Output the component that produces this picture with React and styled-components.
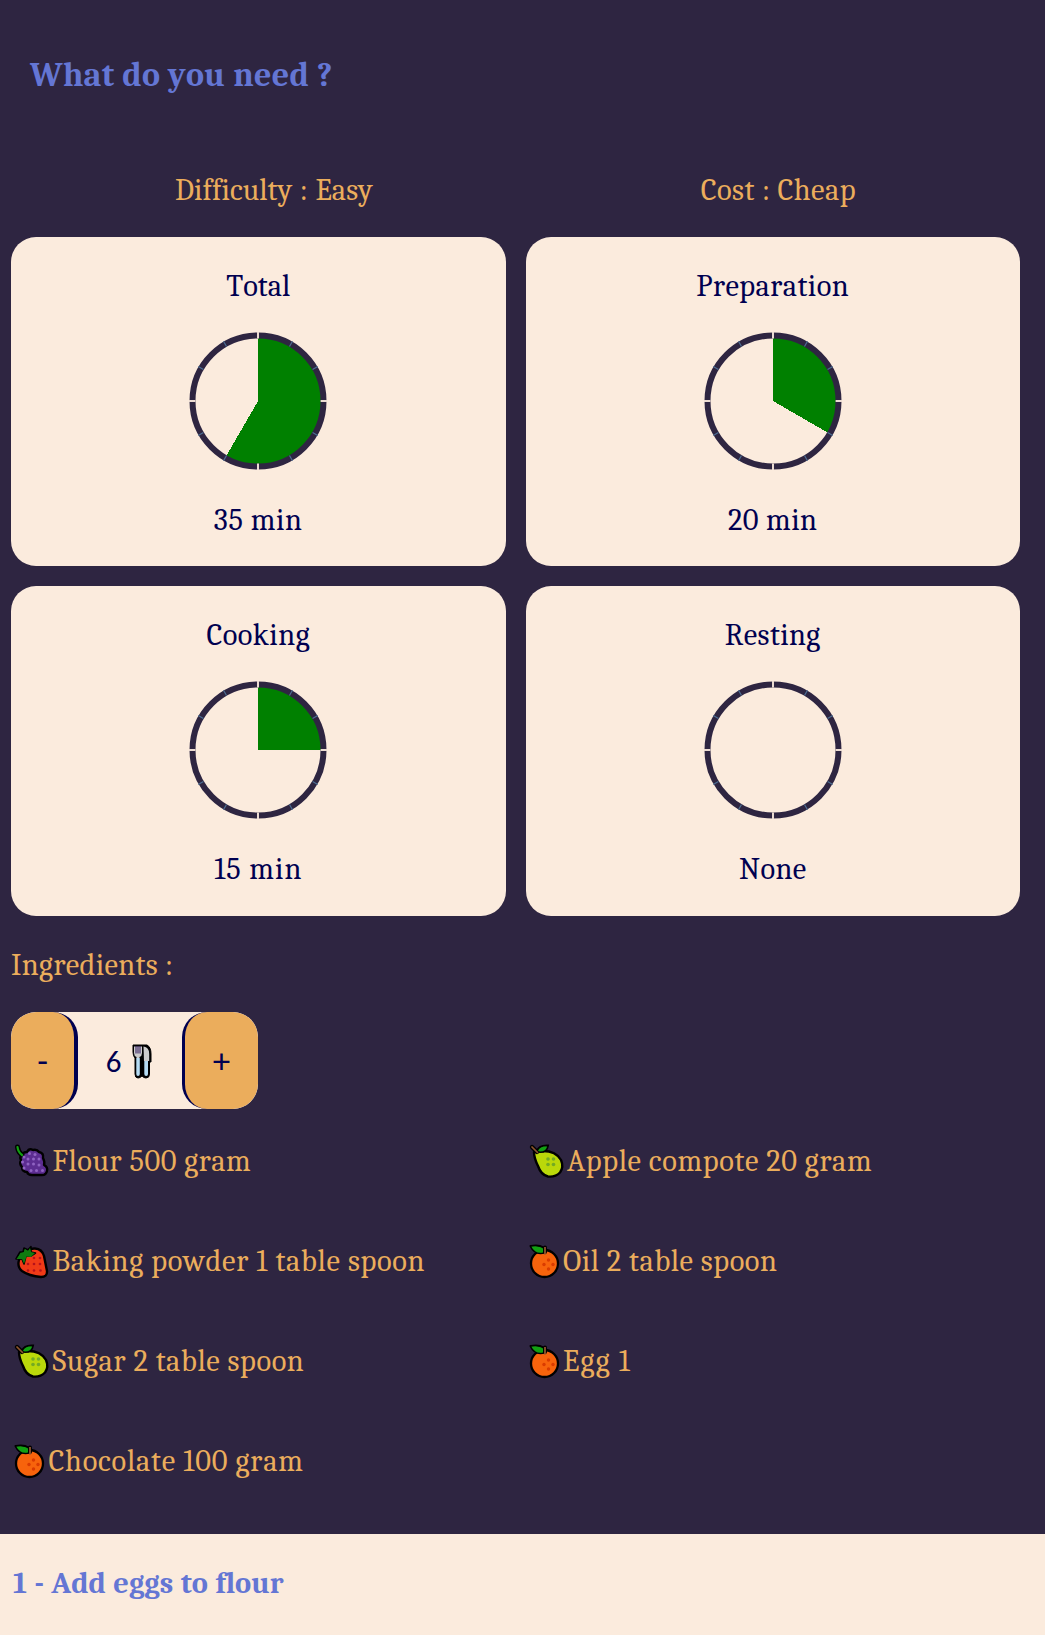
import React from 'react';
import styled, { createGlobalStyle } from 'styled-components';

const color = {
  night: '#2e2541',
  cream: '#fbebdd',
  amber: '#ebad5c',
  blue: '#6476d4',
  navy: '#000050',
};

const GlobalStyle = createGlobalStyle`
  *, *::before, *::after { box-sizing: border-box; }
  body {
    margin: 0;
    background: ${color.cream};
    font-family: Cambria, Caladea, "Noto Serif", serif;
    font-size: 30.4px;
    font-kerning: none;
    line-height: 40px;
    overflow: hidden;
  }
`;

const Panel = styled.section`
  height: 1534px;
  padding: 55px 25px 0 11px;
  background: ${color.night};
  color: ${color.amber};
`;

const Title = styled.h1`
  margin: 0 0 75px 19px;
  font-size: 34px;
  line-height: 40px;
  font-weight: 700;
  letter-spacing: 0.3px;
  color: ${color.blue};
`;

const Summary = styled.div`
  display: flex;
  justify-content: space-around;
  height: 67px;
  padding-top: 1px;
`;

const Text = styled.span`
  white-space: nowrap;
  letter-spacing: ${p => p.$track || 0}px;
  word-spacing: ${p => p.$words || 0}px;
`;

const CardGrid = styled.div`
  display: grid;
  grid-template-columns: 1fr 1fr;
  gap: 20px;
`;

const Card = styled.article`
  display: flex;
  flex-direction: column;
  align-items: center;
  height: 329.4px;
  padding-top: 30px;
  border-radius: 25px;
  background: ${color.cream};
  color: ${color.navy};
`;

const Dial = styled.svg`
  display: block;
  width: 138px;
  height: 138px;
  margin: 25px 0 31px;
`;

const SectionLabel = styled.h2`
  margin: 30px 0 26px;
  font-size: 30.4px;
  line-height: 40px;
  font-weight: 400;
  letter-spacing: 0.35px;
`;

const Servings = styled.div`
  display: flex;
  width: 247px;
  height: 97px;
  border-radius: 25px;
  background: ${color.cream};
  color: ${color.navy};
  overflow: hidden;
`;

const StepButton = styled.button`
  width: ${p => p.$width}px;
  padding: 2px 0 0;
  border: 0 solid ${color.navy};
  border-width: ${p => (p.$side === 'left' ? '0 4px 0 0' : '0 0 0 3px')};
  border-radius: 25px;
  background: ${color.amber};
  color: ${color.navy};
  font: 35px/95px Carlito, "Noto Sans", sans-serif;
`;

const Count = styled.div`
  flex: 1;
  display: flex;
  align-items: center;
  justify-content: center;
  gap: 11px;
  padding: 2px 2px 0 0;
  font-family: Carlito, "Noto Sans", sans-serif;
  font-size: 31px;
`;

const IngredientGrid = styled.ul`
  display: grid;
  grid-template-columns: 1fr 1fr;
  grid-auto-rows: 100px;
  column-gap: 20px;
  margin: 2px 0 0;
  padding: 0;
  list-style: none;
`;

const Ingredient = styled.li`
  display: flex;
  align-items: center;
  gap: 3.5px;
  padding: 2px 0 0 3px;
`;

const FruitIcon = styled.svg`
  flex: none;
  display: block;
  width: ${p => p.$width}px;
  height: 36px;
  overflow: visible;
`;

const Step = styled.h2`
  margin: 0;
  padding: 30px 0 0 13px;
  font-size: 30.4px;
  line-height: 40px;
  font-weight: 700;
  word-spacing: 0.8px;
  color: ${color.blue};
`;

function Clock({ minutes }) {
  const a = (minutes / 60) * Math.PI * 2;
  const r = 63.5;
  const x = 69 + r * Math.sin(a);
  const y = 69 - r * Math.cos(a);
  const ticks = Array.from({ length: 12 }, (_, i) => i);
  return (
    <Dial viewBox="0 0 138 138">
      {minutes > 0 && (
        <path
          d={`M69 69V${69 - r}A${r} ${r} 0 ${minutes > 30 ? 1 : 0} 1 ${x} ${y}Z`}
          fill="#008000"
          shapeRendering="crispEdges"
        />
      )}
      <circle cx="69" cy="69" r="65.5" fill="none" stroke={color.night} strokeWidth="6" />
      {ticks.map(i => {
        const main = i % 3 === 0;
        return (
          <line
            key={i}
            x1="69" x2="69" y1="0" y2={main ? 6.4 : 6}
            transform={`rotate(${i * 30} 69 69)`}
            stroke={main ? '#ecdcd3' : '#4d6f95'}
            strokeWidth={main ? 2 : 1.2}
          />
        );
      })}
    </Dial>
  );
}

const dots = (list, fill, r = 1.3) =>
  list.map(([cx, cy]) => <circle key={`${cx}-${cy}`} cx={cx} cy={cy} r={r} fill={fill} />);

function Grape() {
  return (
    <FruitIcon $width={35} viewBox="0 0 35 36">
      <path d="M8 11Q9 8 13 8Q15 4 19 6Q23 5 25 8Q30 9 29 14Q31 18 30 21Q34 23 33 27Q32 31.5 27 31H18Q14 31 13 28Q8 28 8 23Q5 20 7 16Q5 13 8 11Z" fill="#5c2d91" stroke="#000" strokeWidth="2.4" strokeLinejoin="round" />
      <path d="M3.5 3Q4 8 8 11" fill="none" stroke="#000" strokeWidth="5" strokeLinecap="round" />
      <path d="M3.5 3Q4 8 8 11" fill="none" stroke="#12a012" strokeWidth="2.2" strokeLinecap="round" />
      {dots([[15.5, 9.5], [21, 10.5], [10, 13], [14, 15], [19.5, 15], [25, 15], [8.5, 18], [14, 20], [19.5, 20], [25, 21], [10, 24], [17, 26.5], [22.5, 26.5], [28.5, 26.5]], '#8f63c2', 1.5)}
    </FruitIcon>
  );
}

function Strawberry() {
  return (
    <FruitIcon $width={35} viewBox="0 0 35 36">
      <path d="M7 12Q13 4 21 4.5Q28 5 30 12L33 27Q33.5 33 27 33Q15 32 8 27Q3 23 5 16Z" fill="#f03a17" stroke="#000" strokeWidth="2.4" strokeLinejoin="round" />
      <path d="M2 15L6 8L9 8L10 4L14 6L17 2.5L17 8L21.5 9L17 12L12 12L10 20L8 15Z" fill="#107c10" stroke="#000" strokeWidth="1.6" strokeLinejoin="round" />
      <path d="M2.5 15L7 9L10 8L11 5L14 7L16 4L17 8L21 9L17 13L12.5 12.5L10 20L8 15Z" fill="#107c10" />
      {dots([[20, 14], [26, 14], [14, 20], [20, 20], [26, 20], [14, 26.5], [20, 26.5], [26.5, 26.5]], '#b5121b')}
    </FruitIcon>
  );
}

function Pear() {
  return (
    <FruitIcon $width={35} viewBox="0 0 35 36">
      <path d="M5 8Q7 6.5 14 7Q27 7 32 16Q35 23 31 28.5Q26 33.5 19 32.5Q12 31 9 22Q5 14 5 8Z" fill="#bad80a" stroke="#000" strokeWidth="2.4" strokeLinejoin="round" />
      <path d="M8 7Q10 1 19 1.5Q18 8 11 8Z" fill="#12a012" stroke="#000" strokeWidth="2" />
      <path d="M3 3L8 8" stroke="#000" strokeWidth="4.4" strokeLinecap="round" />
      <path d="M9 7Q11 2 18 2.5Q17 7.5 11 7.5Z" fill="#12a012" />
      <path d="M3 3L8.5 8.5" stroke="#8e562e" strokeWidth="1.7" strokeLinecap="round" />
      {dots([[19, 15], [24.5, 15], [19, 20.5], [24.5, 20.5]], '#73aa24', 1.8)}
    </FruitIcon>
  );
}

function Orange() {
  return (
    <FruitIcon $width={31} viewBox="0 0 31 36">
      <circle cx="15.5" cy="19.5" r="13.5" fill="#f7630c" stroke="#000" strokeWidth="2.3" />
      <path d="M1.5 2Q10 .5 14.5 3.5L16 8.500Q6 11.500 1.5 2Z" fill="#12a012" stroke="#000" strokeWidth="2" strokeLinejoin="round" />
      <path d="M16 3.5V8" stroke="#000" strokeWidth="4" strokeLinecap="round" />
      <path d="M2.5 2.700Q10 1.5 14 5V8.5Q6 10 2.5 2.700Z" fill="#12a012" />
      <path d="M16 3V10.5" stroke="#8e562e" strokeWidth="1.8" />
      {dots([[19.5, 16], [15, 20.5], [24, 20.5], [19.5, 25]], '#da3b01', 1.7)}
    </FruitIcon>
  );
}

const Cutlery = styled.svg`
  flex: none;
  width: 20px;
  height: 35px;
`;

function ForkAndKnife() {
  return (
    <Cutlery viewBox="0 0 20 35">
      <path d="M1 1H15Q19 3 19 10V18H17.5V30Q17.5 34 14 34Q12 34 10 32Q8 34 6 34Q3 34 3 30V14Q1 12 1 8Z" fill="#000" stroke="#000" strokeWidth="1" />
      <path d="M2 2.5H10V9Q10 12 7.5 13V14H4.5V13Q2 12 2 9Z" fill="#ccc" />
      <path d="M4 2V9.5M6 2V9.5M8 2V9.5" stroke="#2a1258" strokeWidth="1" />
      <path d="M11.5 2.5Q17.2 3 17.2 10V17H12Z" fill="#ccc" />
      <path d="M4.3 14H7.8V30Q7.8 32 6 32Q4.3 32 4.3 30Z" fill="#b5dcf4" />
      <path d="M12.3 17H16V30Q16 32 14.2 32Q12.3 32 12.3 30Z" fill="#b5dcf4" />
    </Cutlery>
  );
}

const timings = [
  { label: 'Total', minutes: 35, value: '35 min', labelTrack: 0, valueTrack: 0.6 },
  { label: 'Preparation', minutes: 20, value: '20 min', labelTrack: 0.45, valueTrack: 0.45 },
  { label: 'Cooking', minutes: 15, value: '15 min', labelTrack: 0.5, valueTrack: 1 },
  { label: 'Resting', minutes: 0, value: 'None', labelTrack: 0.4, valueTrack: 0.4 },
];

const ingredients = [
  { Icon: Grape, text: 'Flour 500 gram', track: 0.55 },
  { Icon: Pear, text: 'Apple compote 20 gram', track: 0.62 },
  { Icon: Strawberry, text: 'Baking powder 1 table spoon', track: 0.7 },
  { Icon: Orange, text: 'Oil 2 table spoon', track: 0.58 },
  { Icon: Pear, text: 'Sugar 2 table spoon', track: 0.6 },
  { Icon: Orange, text: 'Egg 1', track: 1.2 },
  { Icon: Orange, text: 'Chocolate 100 gram', track: 0.78 },
];

export default function App() {
  return (
    <>
      <GlobalStyle />
      <Panel>
        <Title>What do you need ?</Title>
        <Summary>
          <Text $words={1}>Difficulty : Easy</Text>
          <Text $track={0.45}>Cost : Cheap</Text>
        </Summary>
        <CardGrid>
          {timings.map(t => (
            <Card key={t.label}>
              <Text $track={t.labelTrack}>{t.label}</Text>
              <Clock minutes={t.minutes} />
              <Text $track={t.valueTrack}>{t.value}</Text>
            </Card>
          ))}
        </CardGrid>
        <SectionLabel>Ingredients :</SectionLabel>
        <Servings>
          <StepButton $side="left" $width={67}>-</StepButton>
          <Count>6<ForkAndKnife /></Count>
          <StepButton $side="right" $width={76}>+</StepButton>
        </Servings>
        <IngredientGrid>
          {ingredients.map(({ Icon, text, track }) => (
            <Ingredient key={text}>
              <Icon />
              <Text $track={track}>{text}</Text>
            </Ingredient>
          ))}
        </IngredientGrid>
      </Panel>
      <Step>1 - Add eggs to flour</Step>
    </>
  );
}
